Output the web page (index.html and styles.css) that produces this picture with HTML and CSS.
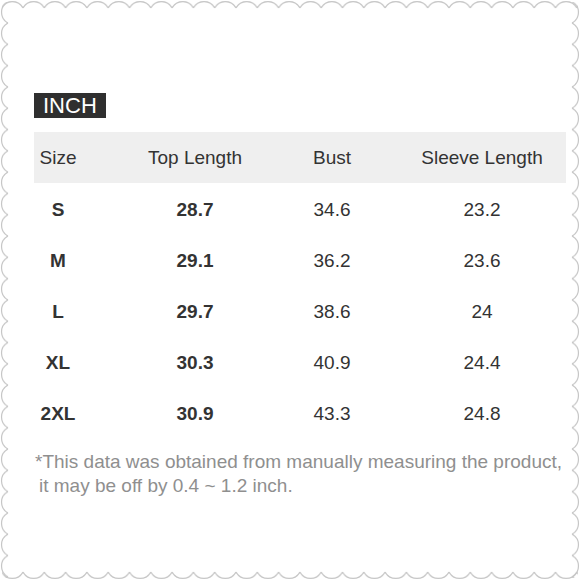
FILE: index.html
```html
<!DOCTYPE html>
<html>
<head>
<meta charset="utf-8">
<link rel="stylesheet" href="styles.css">
</head>
<body>
<div class="page">
  <svg class="frame" width="580" height="580" viewBox="0 0 580 580" xmlns="http://www.w3.org/2000/svg">
    <defs>
      <pattern id="top" patternUnits="userSpaceOnUse" x="23" y="0" width="21.3" height="10">
        <path d="M0 8 A12 12 0 0 1 21.3 8" fill="none" stroke="#c6c6c6" stroke-width="1.2"/>
      </pattern>
      <pattern id="bottom" patternUnits="userSpaceOnUse" x="23" y="570" width="21.3" height="10">
        <path d="M0 2 A12 12 0 0 0 21.3 2" fill="none" stroke="#c6c6c6" stroke-width="1.2"/>
      </pattern>
      <pattern id="left" patternUnits="userSpaceOnUse" x="0" y="23" width="10" height="21.3">
        <path d="M8 0 A12 12 0 0 0 8 21.3" fill="none" stroke="#c6c6c6" stroke-width="1.2"/>
      </pattern>
      <pattern id="right" patternUnits="userSpaceOnUse" x="570" y="23" width="10" height="21.3">
        <path d="M2 0 A12 12 0 0 1 2 21.3" fill="none" stroke="#c6c6c6" stroke-width="1.2"/>
      </pattern>
    </defs>
    <rect x="2" y="0" width="576" height="9" fill="url(#top)"/>
    <rect x="2" y="571" width="576" height="9" fill="url(#bottom)"/>
    <rect x="0" y="2" width="9" height="576" fill="url(#left)"/>
    <rect x="571" y="2" width="9" height="576" fill="url(#right)"/>
  </svg>

  <div class="content">
    <div class="badge">INCH</div>
    <div class="table">
      <div class="row head">
        <div class="c c1">Size</div>
        <div class="c c2">Top Length</div>
        <div class="c c3">Bust</div>
        <div class="c c4">Sleeve Length</div>
      </div>
      <div class="row">
        <div class="c c1 b">S</div>
        <div class="c c2 b">28.7</div>
        <div class="c c3">34.6</div>
        <div class="c c4">23.2</div>
      </div>
      <div class="row">
        <div class="c c1 b">M</div>
        <div class="c c2 b">29.1</div>
        <div class="c c3">36.2</div>
        <div class="c c4">23.6</div>
      </div>
      <div class="row">
        <div class="c c1 b">L</div>
        <div class="c c2 b">29.7</div>
        <div class="c c3">38.6</div>
        <div class="c c4">24</div>
      </div>
      <div class="row">
        <div class="c c1 b">XL</div>
        <div class="c c2 b">30.3</div>
        <div class="c c3">40.9</div>
        <div class="c c4">24.4</div>
      </div>
      <div class="row">
        <div class="c c1 b">2XL</div>
        <div class="c c2 b">30.9</div>
        <div class="c c3">43.3</div>
        <div class="c c4">24.8</div>
      </div>
    </div>
    <p class="note">*This data was obtained from manually measuring the product,<br><span class="indent">it may be off by 0.4 ~ 1.2 inch.</span></p>
  </div>
</div>
</body>
</html>
```

FILE: styles.css
```css
html, body {
  margin: 0;
  padding: 0;
  background: #fff;
}

.page {
  position: relative;
  width: 580px;
  height: 580px;
  overflow: hidden;
  font-family: "Liberation Sans", Arial, sans-serif;
  color: #333;
}

.frame {
  position: absolute;
  left: 0;
  top: 0;
}

.content {
  padding: 93px 0 0 34px;
}

.badge {
  display: inline-block;
  background: #2f2f2f;
  color: #fff;
  font-size: 22px;
  line-height: 25px;
  height: 25px;
  padding: 0 9px;
}

.table {
  margin-top: 14px;
  width: 532px;
}

.row {
  display: grid;
  grid-template-columns: 48px 226px 48px 210px;
  height: 51px;
  align-items: center;
  font-size: 19px;
}

.row.head {
  background: #efefef;
  margin-bottom: 1px;
}

.c {
  text-align: center;
  white-space: nowrap;
}

.c4 {
  padding-left: 42px;
}

.b {
  font-weight: bold;
}

.note {
  margin: 11px 0 0 1px;
  font-size: 19px;
  line-height: 23.5px;
  color: #8f8f8f;
  white-space: nowrap;
}

.indent {
  padding-left: 4px;
}
```
